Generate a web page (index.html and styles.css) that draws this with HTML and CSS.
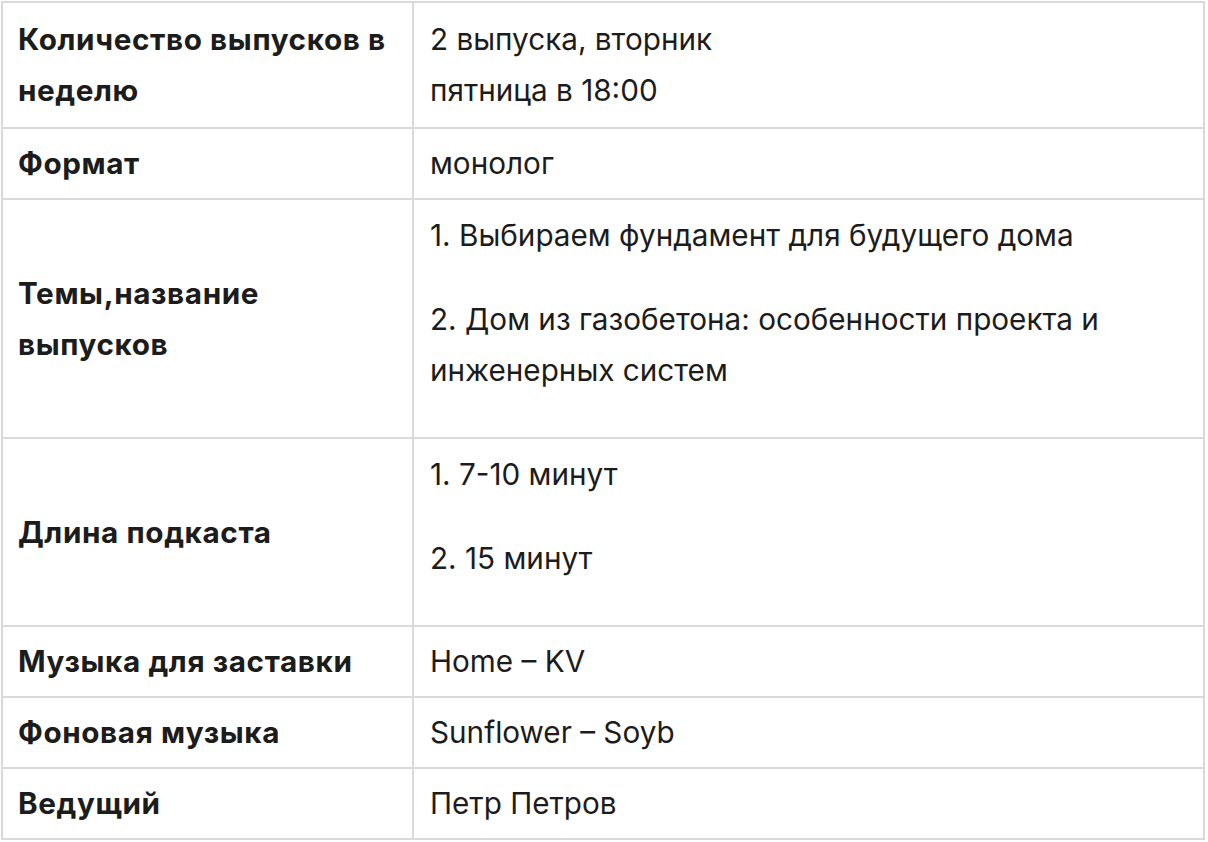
FILE: index.html
```html
<!DOCTYPE html>
<html lang="ru">
<head>
<meta charset="utf-8">
<title>Подкаст</title>
<link rel="stylesheet" href="styles.css">
</head>
<body>
<table class="info">
  <colgroup><col class="col-label"><col class="col-value"></colgroup>
  <tbody>
    <tr class="row-tall">
      <th>Количество выпусков в неделю</th>
      <td>2 выпуска, вторник<br>пятница в 18:00</td>
    </tr>
    <tr>
      <th>Формат</th>
      <td>монолог</td>
    </tr>
    <tr>
      <th>Темы,название выпусков</th>
      <td class="multi"><p>1. Выбираем фундамент для будущего дома</p><p>2. Дом из газобетона: особенности проекта и инженерных систем</p></td>
    </tr>
    <tr>
      <th>Длина подкаста</th>
      <td class="multi"><p>1. 7-10 минут</p><p>2. 15 минут</p></td>
    </tr>
    <tr>
      <th>Музыка для заставки</th>
      <td>Home – KV</td>
    </tr>
    <tr>
      <th>Фоновая музыка</th>
      <td>Sunflower – Soyb</td>
    </tr>
    <tr>
      <th>Ведущий</th>
      <td>Петр Петров</td>
    </tr>
  </tbody>
</table>
</body>
</html>
```
FILE: styles.css
```css
html, body {
  margin: 0;
  padding: 0;
  background: #ffffff;
}
body {
  padding: 1px 0 0 1px;
  font-family: Inter, "Noto Sans", "Liberation Sans", sans-serif;
  font-size: 29.7px;
  line-height: 51px;
  color: #1c1c1c;
}
.info {
  width: 1204px;
  border-collapse: collapse;
  table-layout: fixed;
}
.col-label { width: 411px; }
.info th,
.info td {
  border: 2px solid #d9d9d9;
  padding: 9px 17px 9px 16px;
  text-align: left;
  vertical-align: middle;
}
.info th {
  font-weight: 700;
  letter-spacing: 0.6px;
  padding-left: 15px;
}
.info td {
  font-weight: 400;
}
.row-tall th,
.row-tall td {
  padding-top: 11px;
  padding-bottom: 11px;
}
.info td.multi {
  vertical-align: top;
  padding-top: 10px;
  padding-bottom: 8px;
}
.multi p {
  margin: 0 0 33px 0;
}
```
